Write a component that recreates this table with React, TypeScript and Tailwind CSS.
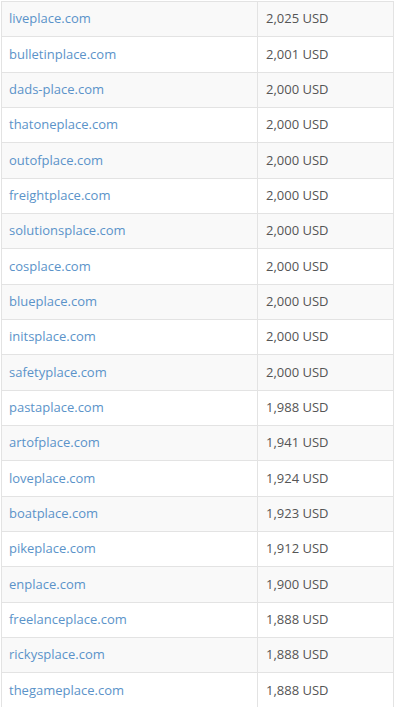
const rows: [string, string][] = [
  ['liveplace.com', '2,025 USD'],
  ['bulletinplace.com', '2,001 USD'],
  ['dads-place.com', '2,000 USD'],
  ['thatoneplace.com', '2,000 USD'],
  ['outofplace.com', '2,000 USD'],
  ['freightplace.com', '2,000 USD'],
  ['solutionsplace.com', '2,000 USD'],
  ['cosplace.com', '2,000 USD'],
  ['blueplace.com', '2,000 USD'],
  ['initsplace.com', '2,000 USD'],
  ['safetyplace.com', '2,000 USD'],
  ['pastaplace.com', '1,988 USD'],
  ['artofplace.com', '1,941 USD'],
  ['loveplace.com', '1,924 USD'],
  ['boatplace.com', '1,923 USD'],
  ['pikeplace.com', '1,912 USD'],
  ['enplace.com', '1,900 USD'],
  ['freelanceplace.com', '1,888 USD'],
  ['rickysplace.com', '1,888 USD'],
  ['thegameplace.com', '1,888 USD'],
];

export default function App() {
  return (
    <div className="min-h-screen bg-white pl-px pt-px" style={{ fontFamily: '"Open Sans", sans-serif' }}>
      <table className="w-[393px] table-fixed border-collapse text-[13px]">
        <colgroup>
          <col className="w-[256px]" />
          <col />
        </colgroup>
        <tbody>
          {rows.map(([domain, price], i) => (
            <tr key={domain} className={i % 2 === 0 ? 'bg-[#f9f9f9]' : 'bg-white'}>
              <td className="h-[35.33px] border border-[#e3e3e3] px-[7px] align-middle">
                <a href="#" className="text-[#5b93c9]">
                  {domain}
                </a>
              </td>
              <td className="h-[35.33px] border border-[#e3e3e3] px-[8px] align-middle text-[#555555]">
                {price}
              </td>
            </tr>
          ))}
        </tbody>
      </table>
    </div>
  );
}
